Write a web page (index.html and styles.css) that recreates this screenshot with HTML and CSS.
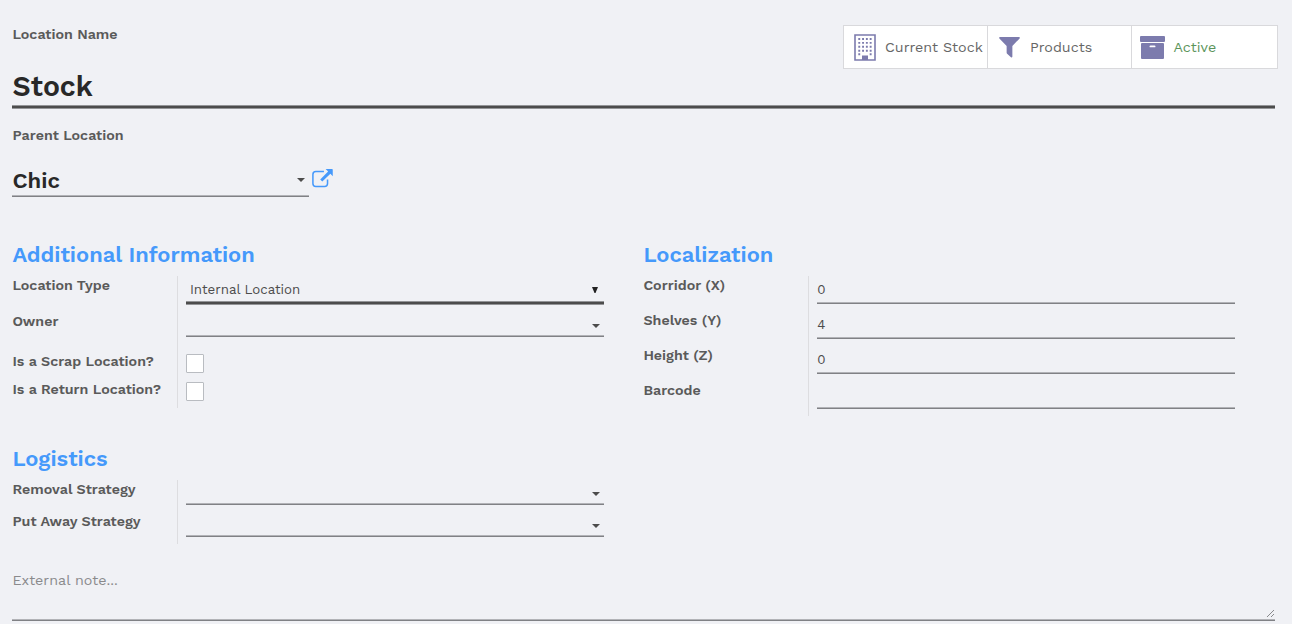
FILE: index.html
```
<!DOCTYPE html>
<html lang="en">
<head>
<meta charset="utf-8">
<title>Stock location</title>
<link rel="stylesheet" href="styles.css">
</head>
<body>
<main class="sheet">
  <header class="top">
    <div class="label top-label"><span>Location Name</span></div>
    <nav class="buttons">
      <a class="stat"><svg class="i-building" viewBox="0 0 22 27"><path fill="none" stroke="currentColor" stroke-width="1.6" d="M1 1h20v25H1z"/><path fill="none" stroke="currentColor" stroke-width="1.9" stroke-dasharray="1.9 1.9" d="M4.3 5h14M4.3 8.9h14M4.3 12.8h14M4.3 16.7h14"/><path fill="currentColor" d="M4.3 19.3h1.9v1.9h-1.9zM15.7 19.3h1.9v1.9h-1.9zM8 21.5h6V26H8z"/></svg><span>Current Stock</span></a>
      <a class="stat"><svg class="i-filter" viewBox="0 0 22 22"><path fill="currentColor" d="M1 0h20q1.3.4.6 1.5L14 9.3v11.4q-.4 1.2-1.5.6l-4-3.8q-.5-.4-.5-1V9.3L.4 1.5Q-.3.4 1 0z"/></svg><span>Products</span></a>
      <a class="stat active"><svg class="i-archive" viewBox="0 0 25 23"><path fill="currentColor" fill-rule="evenodd" d="M1 0h23q1 0 1 1v4q0 1-1 1H1Q0 6 0 5V1q0-1 1-1zM2 7h21q1 0 1 1v14q0 1-1 1H2q-1 0-1-1V8q0-1 1-1zM10.5 9.5q-1 0-1 .9t1 .9h4q1 0 1-.9t-1-.9z"/></svg><span>Active</span></a>
    </nav>
  </header>
  <div class="title"><span>Stock</span></div>
  <div class="label parent-label"><span>Parent Location</span></div>
  <div class="parent">
    <div class="parent-field"><span>Chic</span><i class="caret"></i></div>
    <svg class="i-external" viewBox="0 0 22 20"><path fill="none" stroke="currentColor" stroke-width="1.6" d="M12.5 2.6H4Q.9 2.6.9 5.7v9.6q0 3.1 3.1 3.1h9.2q3.1 0 3.1-3.1v-4.2"/><path fill="currentColor" d="M14.3 0H21q.8 0 .8.8v6.7l-2.5-2.5-8.5 8.2-2.2-2.2 8.3-8.4z"/></svg>
  </div>
  <div class="columns">
    <section class="info">
      <h2>Additional Information</h2>
      <div class="group">
        <div class="labels">
          <div class="label r36"><span>Location Type</span></div>
          <div class="label r40"><span>Owner</span></div>
          <div class="label r28"><span>Is a Scrap Location?</span></div>
          <div class="label r28"><span>Is a Return Location?</span></div>
        </div>
        <div class="fields info-fields">
          <div class="field select"><span>Internal Location</span><svg class="i-down" viewBox="0 0 6 6"><path fill="#222" d="M0 0h6L3.5 6h-1z"/></svg></div>
          <div class="field owner"><i class="caret"></i></div>
          <div class="check"></div>
          <div class="check"></div>
        </div>
      </div>
    </section>
    <section class="local">
      <h2>Localization</h2>
      <div class="group">
        <div class="labels">
          <div class="label r35"><span>Corridor (X)</span></div>
          <div class="label r35"><span>Shelves (Y)</span></div>
          <div class="label r35"><span>Height (Z)</span></div>
          <div class="label r35"><span>Barcode</span></div>
        </div>
        <div class="fields local-fields">
          <div class="field num"><span>0</span></div>
          <div class="field num"><span>4</span></div>
          <div class="field num"><span>0</span></div>
          <div class="field num"></div>
        </div>
      </div>
    </section>
  </div>
  <section class="info">
    <h2>Logistics</h2>
    <div class="group">
      <div class="labels">
        <div class="label r32"><span>Removal Strategy</span></div>
        <div class="label r32"><span>Put Away Strategy</span></div>
      </div>
      <div class="fields log-fields">
        <div class="field log"><i class="caret"></i></div>
        <div class="field log"><i class="caret"></i></div>
      </div>
    </div>
  </section>
  <div class="note"><span>External note...</span><svg class="i-grip" viewBox="0 0 9 9"><path fill="none" stroke="#88898c" d="M1 8l7-7M5 8l3-3"/></svg></div>
</main>
</body>
</html>
```
FILE: styles.css
```
* { box-sizing: border-box; }
body { margin: 0; background: #f0f1f5; color: #4c4c4c; font: 14.25px/20px "Work Sans", Inter, sans-serif; overflow: hidden; }
svg { display: block; flex: none; }
.sheet { height: 624px; padding: 25px 17px 0 12px; }
.label { padding-left: .4px; font-weight: 600; color: #5a5a5a; white-space: nowrap; }
.top { display: flex; justify-content: space-between; height: 44px; }
.buttons { display: flex; width: 435px; height: 44px; margin-right: -3px; background: #fff; border: 1px solid #d9d9dc; }
.stat { display: flex; align-items: center; width: 144px; border-right: 1px solid #d9d9dc; color: #666; font-size: 14.3px; white-space: nowrap; }
.stat:nth-child(2) { width: 144.4px; }
.stat:last-child { border-right: 0; color: #5a945a; }
.stat svg { color: #7c7bad; }
.i-building { width: 22px; height: 27px; margin: 0 9px 0 10px; }
.i-filter { width: 21px; height: 21px; margin: 1px 10px 0 11px; }
.i-archive { width: 25px; height: 23px; margin: 0 8px 0 8px; }
.top-label { margin-top: -1px; }
.title { height: 39px; padding-left: .5px; border-bottom: 2px solid #4c4c4c; box-shadow: inset 0 -1px #939497, 0 1px #939497; line-height: 35px; font-size: 28.3px; font-weight: 600; color: #282828; }
.parent-label { margin-top: 17px; height: 20px; }
.parent { display: flex; gap: 3px; margin-top: 20px; height: 32px; }
.parent-field { display: flex; justify-content: space-between; align-items: center; width: 297px; border-bottom: 1px solid #808185; box-shadow: inset 0 -1px #b2b3b7; padding: 0 4px 1px .5px; font-size: 22.1px; font-weight: 600; color: #282828; }
.caret { width: 0; height: 0; margin-left: auto; border: 4.5px solid transparent; border-top-color: #4c4c4c; border-bottom: 0; }
.i-external { width: 21px; height: 19px; margin-top: 4px; color: #4599fb; }
.columns { display: grid; grid-template-columns: 631px 1fr; margin-top: 45px; height: 204px; }
h2 { margin: 0; height: 33px; padding-left: .4px; line-height: 26px; font-size: 21.9px; font-weight: 600; color: #4599fb; white-space: nowrap; }
.group { display: flex; }
.labels { width: 165px; }
.r36 { height: 36px; } .r40 { height: 40px; } .r35 { height: 35px; } .r28 { height: 28px; } .r32 { height: 32px; }
.fields { width: 427px; margin-top: 1px; padding-left: 8px; border-left: 1px solid #dddde0; }
.info-fields { height: 132px; }
.local-fields { height: 140px; }
.log-fields { height: 64px; }
.field { display: flex; justify-content: space-between; border-bottom: 1px solid #808185; box-shadow: inset 0 -1px #b2b3b7; padding-right: 4px; color: #4c4c4c; font-size: 13.3px; }
.select { height: 28px; border-bottom: 2px solid #4c4c4c; box-shadow: inset 0 -1px #939497, 0 1px #939497; padding: 4px 6px 0 4px; }
.i-down { width: 6px; height: 6px; margin-top: 7px; }
.owner { height: 33px; align-items: flex-end; padding-bottom: 8px; margin-bottom: 17px; }
.check { width: 18px; height: 19px; margin-bottom: 9px; background: #fff; border: 1px solid #b9bcc1; border-radius: 1px; }
.num { height: 35px; padding-top: 11px; padding-left: .3px; }
.num:first-child { height: 28px; padding-top: 4px; }
.log { height: 32px; align-items: flex-end; padding-bottom: 8px; }
.log:first-child { height: 25px; }
.note { display: flex; justify-content: space-between; align-items: flex-end; margin-top: 26px; height: 51px; border-bottom: 1px solid #808185; box-shadow: inset 0 -1px #b2b3b7; color: #8a8a8c; }
.note span { align-self: flex-start; padding-left: .4px; font-size: 14.3px; }
.i-grip { width: 9px; height: 9px; margin-bottom: 2px; }
```
